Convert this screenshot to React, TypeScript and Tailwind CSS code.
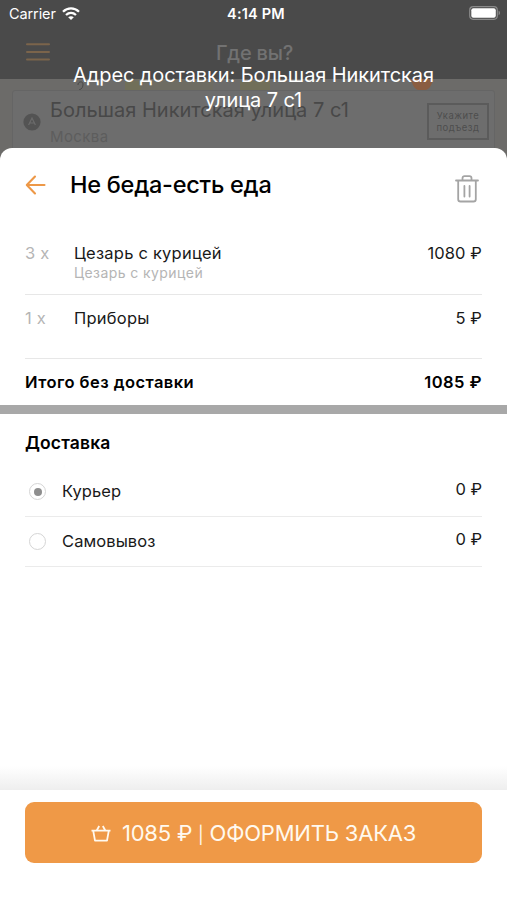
import type { ReactNode } from 'react';

const cartItems = [
  { id: 1, count: 3, name: 'Цезарь с курицей', note: 'Цезарь с курицей', price: 1080 },
  { id: 2, count: 1, name: 'Приборы', note: '', price: 5 },
];

function StatusBar() {
  return (
    <div className="flex h-7 items-center justify-between pl-[9px] pr-1.5 text-white">
      <div className="flex w-[120px] items-center">
        <span className="text-[14.5px] tracking-[-0.1px]">Carrier</span>
        <svg className="ml-[6px] -mt-0.5" width="18" height="13" viewBox="0 0 18 13" fill="none" stroke="currentColor" strokeWidth="2.3">
          <path d="M1 4.8C5.6.3 12.4.3 17 4.8" />
          <path d="M4 8c3-2.7 7-2.7 10 0" />
          <path d="M6.2 10.2c1.8-1.4 3.8-1.4 5.6 0L9 13Z" fill="currentColor" stroke="none" />
        </svg>
      </div>
      <span className="pl-0.5 text-[14.5px] font-semibold tracking-[0.2px]">4:14 PM</span>
      <div className="flex w-[120px] justify-end">
        <svg className="-mt-0.5" width="32" height="14" viewBox="0 0 32 14">
          <rect x=".7" y=".7" width="27.6" height="12.6" rx="3.5" fill="none" stroke="#8a8a8a" strokeWidth="1.2" />
          <rect x="2.3" y="2.2" width="24.5" height="9.6" rx="2" fill="#fff" />
          <path d="M29.7 4.8c1.5.6 1.5 3.8 0 4.4Z" fill="#9a9a9a" />
        </svg>
      </div>
    </div>
  );
}

function DimmedHeader() {
  return (
    <header className="relative h-[160px] bg-[#6c6b69]">
      <div className="h-[79px] bg-[#4a4a4a]">
        <StatusBar />
        <div className="relative flex h-[51px] justify-center">
          <svg className="absolute left-[26px] top-[14px]" width="24" height="20" stroke="#7b644b" strokeWidth="2" strokeLinecap="round">
            <path d="M1 2.3h22M1 10h22M1 17.6h22" />
          </svg>
          <span className="pl-0.5 pt-[11px] text-[20px] font-medium leading-7 tracking-[-0.2px] text-[#727272]">Где вы?</span>
        </div>
      </div>

      {/* Map under the address card */}
      <svg className="absolute left-0 top-[79px]" width="507" height="70">
        <path d="M125 0h88v12h-88z" fill="#6e6c62" />
        <path d="M125 2h16v10h-16zM240 2h30v10h-30z" fill="#716f59" />
        <path d="M411 0h22c-1 7-5 12-11 12s-10-5-11-12Z" fill="#8a5d41" />
        <path d="M78 6c0-4 5-4 5-1s-1 5-4 6" stroke="#494949" fill="none" />
      </svg>
      <div className="relative mx-[12px] mt-[11px] flex h-[60px] rounded-t-[3px] border border-[#656565] bg-[#6d6d6d]">
        <svg className="ml-[10px] mt-[22px] shrink-0" width="18" height="18" viewBox="0 0 18 18">
          <circle cx="9" cy="9" r="8.6" fill="#535353" />
          <path d="M5.6 12 9 5l3.4 7M7 10h4" fill="none" stroke="#6c6c6c" strokeWidth="1.2" />
        </svg>
        <div className="ml-[9px] mt-[6px] flex-1 whitespace-nowrap text-[#484848]">
          <p className="text-[20px] leading-[26px]">Большая Никитская улица 7 с1</p>
          <p className="mt-[4px] text-[15px] leading-5 tracking-[0.4px] text-[#5d5d5d]">Москва</p>
        </div>
        <div className="mr-[5px] mt-[12px] flex h-[37px] w-[62px] items-center justify-center border-2 border-[#5b5b5b] text-center text-[9.5px] leading-[11.5px] tracking-[0.5px] text-[#4e4e4e]">
          Укажите<br />подъезд
        </div>
      </div>

      <p className="absolute left-0 top-[63px] w-full text-center text-[20px] leading-[24.5px] tracking-[-0.1px] text-white">
        Адрес доставки: Большая Никитская<br />улица 7 с1
      </p>
    </header>
  );
}

function DeliveryOption({ checked, children }: { checked?: boolean; children: ReactNode }) {
  return (
    <div className="flex h-[50px] items-center border-b border-[#ebebeb] pl-1">
      <span className="flex size-[17px] items-center justify-center rounded-full border-[1.5px] border-[#d5d5d5]">
        {checked && <span className="size-[8px] rounded-full bg-[#8e8e8e]" />}
      </span>
      <span className="ml-4 flex-1 text-[16.5px] tracking-[0.08px]">{children}</span>
      <span className="pb-1 text-[16.5px]">0 ₽</span>
    </div>
  );
}

export default function App() {
  return (
    <div className="flex h-[900px] w-full flex-col overflow-hidden bg-white font-['Inter','Liberation_Sans',sans-serif] text-[#191919]">
      <DimmedHeader />

      <main className="relative -mt-3 flex flex-1 flex-col rounded-t-[12px] bg-white">
        <div className="flex h-[82px] px-[25px]">
          <svg className="mt-[27px]" width="21" height="20" viewBox="0 0 21 20" fill="none" stroke="#ed9847" strokeWidth="2.1" strokeLinecap="round" strokeLinejoin="round">
            <path d="M10 1.5 1.8 10l8.2 8.5M2 10h17.5" />
          </svg>
          <h1 className="ml-[24px] mt-[21px] flex-1 text-[23.5px] font-medium leading-8 tracking-[-0.25px] text-black">Не беда-есть еда</h1>
          <svg className="mr-[3px] mt-[27px]" width="24" height="28" viewBox="0 0 24 28" fill="none" stroke="#a4a4a4" strokeWidth="1.8" strokeLinecap="round">
            <path d="M1 5.5h22M7.5 5V3.2c0-1.3.8-2 2-2h5c1.2 0 2 .7 2 2V5M3.2 6v18.2c0 1.5.8 2.3 2.3 2.3h13c1.5 0 2.3-.8 2.3-2.3V6M9.4 11v10.5M14.6 11v10.5" />
          </svg>
        </div>

        <section className="px-[25px]">
          {cartItems.map((item) => (
            <div key={item.id} className="flex h-[64.5px] border-b border-[#e7e7e7] pt-[13px] text-[16.5px] leading-5">
              <span className="w-[49px] tracking-[0.2px] text-[#b5b5b5]">{item.count} x</span>
              <div className="flex-1">
                <p className="tracking-[0.22px]">{item.name}</p>
                <p className="text-[14px] leading-[19px] tracking-[0.42px] text-[#b5b5b5]">{item.note}</p>
              </div>
              <span className="tracking-[0.1px]">{item.price} ₽</span>
            </div>
          ))}
          <div className="flex h-[46px] items-center justify-between text-[16.5px] font-semibold tracking-[0.45px] text-black">
            <span>Итого без доставки</span>
            <span>1085 ₽</span>
          </div>
        </section>

        <div className="h-[9px] bg-[#a8a8a8]" />

        <section className="px-[25px]">
          <h2 className="h-[53px] pt-[17px] text-[17.5px] font-semibold leading-6 tracking-[0.15px] text-black">Доставка</h2>
          <DeliveryOption checked>Курьер</DeliveryOption>
          <DeliveryOption>Самовывоз</DeliveryOption>
        </section>

        <div className="mt-auto h-6 bg-linear-to-b from-white to-[#eeeeee]" />
        <footer className="h-[110px] px-[25px] pt-[12px]">
          <button className="flex h-[61px] w-full items-center justify-center rounded-[9px] bg-[#ef9947] pt-px text-[22px] tracking-[-0.2px] text-[#fff9ef]">
            <svg className="mr-[11px]" width="20" height="17" viewBox="0 0 20 17" fill="none" stroke="currentColor" strokeWidth="1.8" strokeLinejoin="round">
              <path d="M.5 5.6h19M2.2 5.6l1.8 10h12l1.8-10M5.4 6l2.8-5M14.6 6l-2.8-5" />
            </svg>
            <span>1085 ₽ <span className="text-[17px]">|</span> ОФОРМИТЬ ЗАКАЗ</span>
          </button>
        </footer>
      </main>
    </div>
  );
}
